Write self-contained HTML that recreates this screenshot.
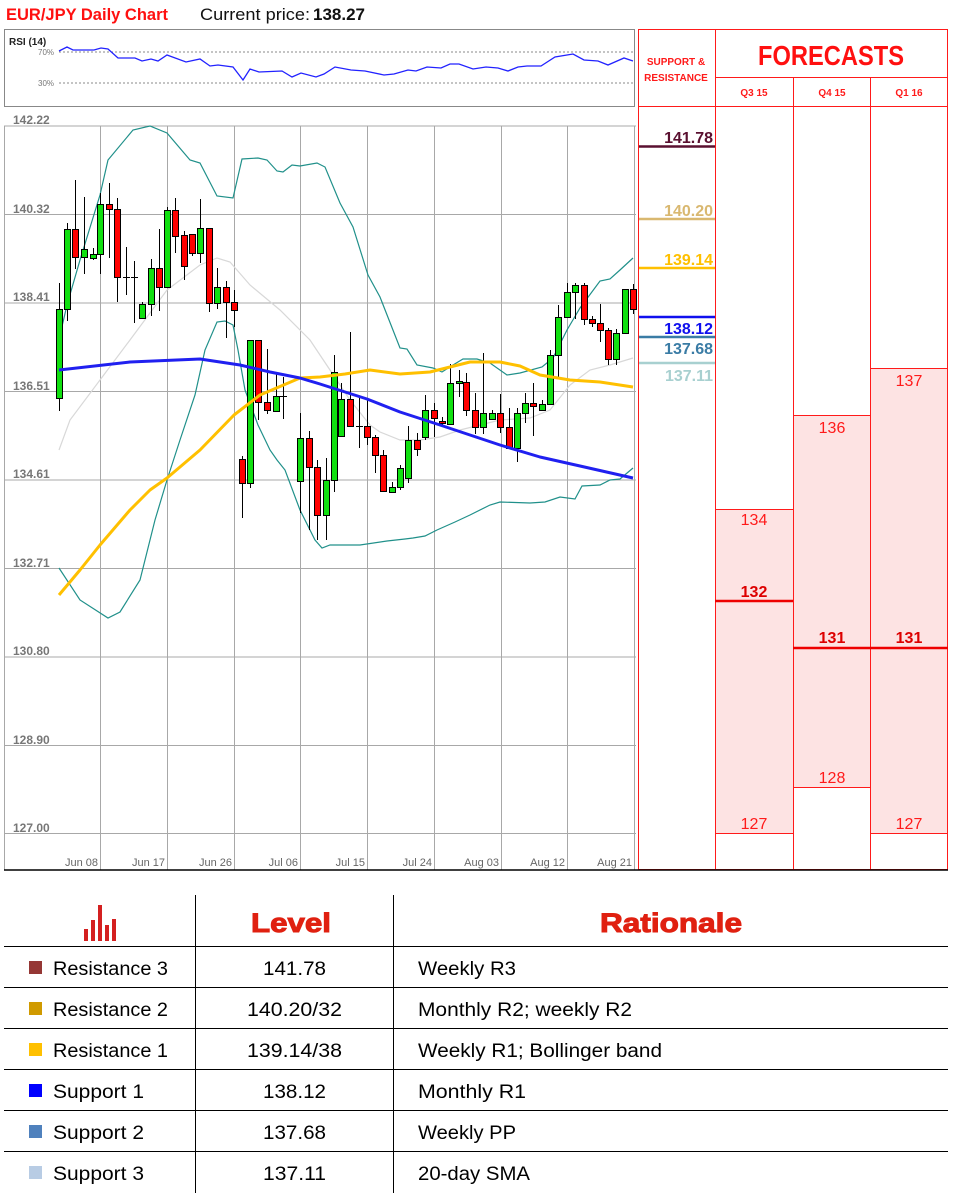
<!DOCTYPE html>
<html><head><meta charset="utf-8"><style>
html,body{margin:0;padding:0;background:#fff;}
svg{display:block;}
text{font-family:"Liberation Sans",sans-serif;}
</style></head><body>
<svg width="962" height="1193" viewBox="0 0 962 1193" xmlns="http://www.w3.org/2000/svg">
<!-- title -->
<text x="6" y="20" font-size="17" font-weight="bold" fill="#ff1010" textLength="162" lengthAdjust="spacingAndGlyphs">EUR/JPY Daily Chart</text>
<text x="200" y="20" font-size="17" fill="#111" textLength="110" lengthAdjust="spacingAndGlyphs">Current price:</text>
<text x="313" y="20" font-size="17" font-weight="bold" fill="#111" textLength="52" lengthAdjust="spacingAndGlyphs">138.27</text>

<!-- RSI -->
<rect x="4.5" y="29.5" width="630" height="77" fill="#fff" stroke="#888"/>
<text x="9" y="45" font-size="10" font-weight="bold" fill="#222">RSI (14)</text>
<line x1="59" y1="52" x2="634" y2="52" stroke="#888" stroke-dasharray="2,2"/>
<line x1="59" y1="83" x2="634" y2="83" stroke="#888" stroke-dasharray="2,2"/>
<text x="38" y="55" font-size="8" fill="#777">70%</text>
<text x="38" y="86" font-size="8" fill="#777">30%</text>
<polyline fill="none" stroke="#2222ff" stroke-width="1.3" points="59,51 67,47 73,50 94,50 101,48 108,49 118,58 135,58 142,61 151,59 158,61 167,55 186,62 200,59 210,66 218,65 233,67 243,80 250,69 259,72 282,71 292,77 301,73 316,77 324,74 335,67 351,70 365,71 384,75 394,74 408,70 416,71 427,67 441,68 450,64 459,64 473,69 486,67 498,68 508,71 518,67 527,66 541,66 555,57 567,55 573,54 584,60 598,61 608,65 624,58 633,61"/>

<!-- main chart grid -->
<g stroke="#a8a8a8" stroke-width="1">
<line x1="4" y1="126" x2="636" y2="126"/>
<line x1="4" y1="214.5" x2="636" y2="214.5"/>
<line x1="4" y1="303" x2="636" y2="303"/>
<line x1="4" y1="391.5" x2="636" y2="391.5"/>
<line x1="4" y1="480" x2="636" y2="480"/>
<line x1="4" y1="568.5" x2="636" y2="568.5"/>
<line x1="4" y1="657" x2="636" y2="657"/>
<line x1="4" y1="745.5" x2="636" y2="745.5"/>
<line x1="4" y1="833.5" x2="636" y2="833.5"/>
<line x1="4.5" y1="126" x2="4.5" y2="870"/>
<line x1="100.5" y1="126" x2="100.5" y2="870"/>
<line x1="167.5" y1="126" x2="167.5" y2="870"/>
<line x1="234.5" y1="126" x2="234.5" y2="870"/>
<line x1="300.5" y1="126" x2="300.5" y2="870"/>
<line x1="367.5" y1="126" x2="367.5" y2="870"/>
<line x1="434.5" y1="126" x2="434.5" y2="870"/>
<line x1="501.5" y1="126" x2="501.5" y2="870"/>
<line x1="567.5" y1="126" x2="567.5" y2="870"/>
<line x1="634.5" y1="126" x2="634.5" y2="870"/>
</g>
<g font-size="12" font-weight="bold" fill="#777">
<text x="13" y="124">142.22</text>
<text x="13" y="213">140.32</text>
<text x="13" y="301">138.41</text>
<text x="13" y="390">136.51</text>
<text x="13" y="478">134.61</text>
<text x="13" y="567">132.71</text>
<text x="13" y="655">130.80</text>
<text x="13" y="744">128.90</text>
<text x="13" y="832">127.00</text>
</g>
<g font-size="11" fill="#666" text-anchor="end">
<text x="98" y="866">Jun 08</text>
<text x="165" y="866">Jun 17</text>
<text x="232" y="866">Jun 26</text>
<text x="298" y="866">Jul 06</text>
<text x="365" y="866">Jul 15</text>
<text x="432" y="866">Jul 24</text>
<text x="499" y="866">Aug 03</text>
<text x="565" y="866">Aug 12</text>
<text x="632" y="866">Aug 21</text>
</g>

<polyline fill="none" stroke="#d8d8d8" stroke-width="1.2" points="59,450 70,420 100,380 130,340 167,290 200,265 217,258 230,262 250,285 280,310 310,340 330,370 350,400 370,425 380,432 400,440 420,440 440,437 460,430 480,425 500,420 530,418 550,410 570,385 590,370 610,365 633,358"/>
<polyline fill="none" stroke="#20908a" stroke-width="1.2" points="60,335 67,305 80,260 100,195 108,160 133,130 150,126 167,133 190,160 200,163 217,196 233,198 242,159 258,158 267,160 277,171 283,172 292,165 300,166 317,163 325,167 340,203 353,227 368,275 380,297 400,348 407,349 417,365 433,368 442,372 453,365 463,359 477,359 490,363 507,375 520,373 542,367 553,358 567,330 580,308 600,281 610,279 620,270 633,258"/>
<polyline fill="none" stroke="#20908a" stroke-width="1.2" points="59,568 80,600 108,618 120,612 140,580 155,520 167,480 180,440 195,395 205,350 217,322 225,321 233,325 238,350 245,390 258,425 270,450 277,460 285,470 300,510 315,540 322,548 330,545 360,545 387,541 405,539 413,538 425,536 437,530 455,522 470,515 490,505 500,502 530,503 545,502 560,497 575,499 582,486 600,485 610,480 620,479 633,468"/>

<g stroke="#000" stroke-width="1">
<line x1="59.5" y1="283" x2="59.5" y2="411"/><rect x="56.5" y="309.5" width="6" height="89" fill="#10e010"/>
<line x1="67.5" y1="223" x2="67.5" y2="321"/><rect x="64.5" y="229.5" width="6" height="80" fill="#10e010"/>
<line x1="75.5" y1="180" x2="75.5" y2="269"/><rect x="72.5" y="229.5" width="6" height="28" fill="#ff0000"/>
<line x1="84.5" y1="197" x2="84.5" y2="274"/><rect x="81.5" y="249.5" width="6" height="8" fill="#10e010"/>
<line x1="93.5" y1="248" x2="93.5" y2="260"/><rect x="90.5" y="254.5" width="6" height="4" fill="#10e010"/>
<line x1="100.5" y1="193" x2="100.5" y2="274"/><rect x="97.5" y="204.5" width="6" height="50" fill="#10e010"/>
<line x1="109.5" y1="183" x2="109.5" y2="258"/><rect x="106.5" y="204.5" width="6" height="5" fill="#ff0000"/>
<line x1="117.5" y1="198" x2="117.5" y2="302"/><rect x="114.5" y="209.5" width="6" height="68" fill="#ff0000"/>
<line x1="126.5" y1="247" x2="126.5" y2="295"/><line x1="123" y1="277.5" x2="130" y2="277.5"/>
<line x1="134.5" y1="261" x2="134.5" y2="323"/><line x1="131" y1="277.5" x2="138" y2="277.5"/>
<line x1="142.5" y1="302" x2="142.5" y2="318"/><rect x="139.5" y="304.5" width="6" height="14" fill="#10e010"/>
<line x1="151.5" y1="259" x2="151.5" y2="316"/><rect x="148.5" y="268.5" width="6" height="36" fill="#10e010"/>
<line x1="159.5" y1="229" x2="159.5" y2="311"/><rect x="156.5" y="268.5" width="6" height="19" fill="#ff0000"/>
<line x1="167.5" y1="207" x2="167.5" y2="288"/><rect x="164.5" y="210.5" width="6" height="77" fill="#10e010"/>
<line x1="175.5" y1="198" x2="175.5" y2="253"/><rect x="172.5" y="210.5" width="6" height="26" fill="#ff0000"/>
<line x1="184.5" y1="231" x2="184.5" y2="280"/><rect x="181.5" y="235.5" width="6" height="31" fill="#ff0000"/>
<line x1="192.5" y1="234" x2="192.5" y2="256"/><rect x="189.5" y="234.5" width="6" height="19" fill="#ff0000"/>
<line x1="200.5" y1="199" x2="200.5" y2="263"/><rect x="197.5" y="228.5" width="6" height="25" fill="#10e010"/>
<line x1="209.5" y1="228" x2="209.5" y2="312"/><rect x="206.5" y="228.5" width="6" height="75" fill="#ff0000"/>
<line x1="217.5" y1="268" x2="217.5" y2="309"/><rect x="214.5" y="287.5" width="6" height="16" fill="#10e010"/>
<line x1="226.5" y1="281" x2="226.5" y2="338"/><rect x="223.5" y="287.5" width="6" height="15" fill="#ff0000"/>
<line x1="234.5" y1="290" x2="234.5" y2="327"/><rect x="231.5" y="302.5" width="6" height="8" fill="#ff0000"/>
<line x1="242.5" y1="456" x2="242.5" y2="518"/><rect x="239.5" y="459.5" width="6" height="24" fill="#ff0000"/>
<line x1="250.5" y1="340" x2="250.5" y2="488"/><rect x="247.5" y="340.5" width="6" height="143" fill="#10e010"/>
<line x1="258.5" y1="340" x2="258.5" y2="420"/><rect x="255.5" y="340.5" width="6" height="62" fill="#ff0000"/>
<line x1="267.5" y1="349" x2="267.5" y2="414"/><rect x="264.5" y="402.5" width="6" height="8" fill="#ff0000"/>
<line x1="276.5" y1="373" x2="276.5" y2="412"/><rect x="273.5" y="396.5" width="6" height="15" fill="#10e010"/>
<line x1="283.5" y1="377" x2="283.5" y2="419"/><line x1="280" y1="396.5" x2="287" y2="396.5"/>
<line x1="300.5" y1="413" x2="300.5" y2="513"/><rect x="297.5" y="438.5" width="6" height="43" fill="#10e010"/>
<line x1="309.5" y1="431" x2="309.5" y2="530"/><rect x="306.5" y="438.5" width="6" height="29" fill="#ff0000"/>
<line x1="317.5" y1="460" x2="317.5" y2="540"/><rect x="314.5" y="467.5" width="6" height="48" fill="#ff0000"/>
<line x1="326.5" y1="458" x2="326.5" y2="540"/><rect x="323.5" y="480.5" width="6" height="35" fill="#10e010"/>
<line x1="334.5" y1="355" x2="334.5" y2="492"/><rect x="331.5" y="372.5" width="6" height="108" fill="#10e010"/>
<line x1="341.5" y1="383" x2="341.5" y2="436"/><rect x="338.5" y="399.5" width="6" height="37" fill="#10e010"/>
<line x1="350.5" y1="332" x2="350.5" y2="427"/><rect x="347.5" y="399.5" width="6" height="27" fill="#ff0000"/>
<line x1="359.5" y1="397" x2="359.5" y2="448"/><line x1="356" y1="426.5" x2="363" y2="426.5"/>
<line x1="367.5" y1="400" x2="367.5" y2="445"/><rect x="364.5" y="426.5" width="6" height="11" fill="#ff0000"/>
<line x1="375.5" y1="435" x2="375.5" y2="473"/><rect x="372.5" y="437.5" width="6" height="18" fill="#ff0000"/>
<line x1="383.5" y1="450" x2="383.5" y2="492"/><rect x="380.5" y="455.5" width="6" height="36" fill="#ff0000"/>
<line x1="392.5" y1="482" x2="392.5" y2="492"/><rect x="389.5" y="487.5" width="6" height="5" fill="#10e010"/>
<line x1="400.5" y1="465" x2="400.5" y2="490"/><rect x="397.5" y="468.5" width="6" height="19" fill="#10e010"/>
<line x1="408.5" y1="426" x2="408.5" y2="483"/><rect x="405.5" y="440.5" width="6" height="38" fill="#10e010"/>
<line x1="417.5" y1="433" x2="417.5" y2="456"/><rect x="414.5" y="440.5" width="6" height="9" fill="#ff0000"/>
<line x1="425.5" y1="395" x2="425.5" y2="440"/><rect x="422.5" y="410.5" width="6" height="27" fill="#10e010"/>
<line x1="434.5" y1="403" x2="434.5" y2="437"/><rect x="431.5" y="410.5" width="6" height="8" fill="#ff0000"/>
<line x1="442.5" y1="417" x2="442.5" y2="426"/><rect x="439.5" y="421.5" width="6" height="2" fill="#ff0000"/>
<line x1="450.5" y1="364" x2="450.5" y2="424"/><rect x="447.5" y="383.5" width="6" height="41" fill="#10e010"/>
<line x1="459.5" y1="370" x2="459.5" y2="397"/><rect x="456.5" y="381.5" width="6" height="2" fill="#10e010"/>
<line x1="466.5" y1="373" x2="466.5" y2="416"/><rect x="463.5" y="382.5" width="6" height="28" fill="#ff0000"/>
<line x1="475.5" y1="393" x2="475.5" y2="434"/><rect x="472.5" y="410.5" width="6" height="17" fill="#ff0000"/>
<line x1="483.5" y1="353" x2="483.5" y2="434"/><rect x="480.5" y="413.5" width="6" height="14" fill="#10e010"/>
<line x1="492.5" y1="410" x2="492.5" y2="420"/><rect x="489.5" y="413.5" width="6" height="6" fill="#10e010"/>
<line x1="500.5" y1="394" x2="500.5" y2="433"/><rect x="497.5" y="413.5" width="6" height="14" fill="#ff0000"/>
<line x1="509.5" y1="408" x2="509.5" y2="448"/><rect x="506.5" y="427.5" width="6" height="21" fill="#ff0000"/>
<line x1="517.5" y1="408" x2="517.5" y2="462"/><rect x="514.5" y="413.5" width="6" height="35" fill="#10e010"/>
<line x1="525.5" y1="393" x2="525.5" y2="423"/><rect x="522.5" y="403.5" width="6" height="10" fill="#10e010"/>
<line x1="533.5" y1="383" x2="533.5" y2="436"/><rect x="530.5" y="403.5" width="6" height="3" fill="#ff0000"/>
<line x1="542.5" y1="400" x2="542.5" y2="410"/><rect x="539.5" y="404.5" width="6" height="6" fill="#10e010"/>
<line x1="550.5" y1="350" x2="550.5" y2="405"/><rect x="547.5" y="355.5" width="6" height="49" fill="#10e010"/>
<line x1="558.5" y1="305" x2="558.5" y2="377"/><rect x="555.5" y="317.5" width="6" height="38" fill="#10e010"/>
<line x1="567.5" y1="283" x2="567.5" y2="317"/><rect x="564.5" y="292.5" width="6" height="25" fill="#10e010"/>
<line x1="575.5" y1="283" x2="575.5" y2="319"/><rect x="572.5" y="285.5" width="6" height="7" fill="#10e010"/>
<line x1="584.5" y1="283" x2="584.5" y2="325"/><rect x="581.5" y="285.5" width="6" height="34" fill="#ff0000"/>
<line x1="592.5" y1="316" x2="592.5" y2="327"/><rect x="589.5" y="319.5" width="6" height="4" fill="#ff0000"/>
<line x1="600.5" y1="304" x2="600.5" y2="342"/><rect x="597.5" y="323.5" width="6" height="7" fill="#ff0000"/>
<line x1="608.5" y1="328" x2="608.5" y2="365"/><rect x="605.5" y="330.5" width="6" height="29" fill="#ff0000"/>
<line x1="616.5" y1="329" x2="616.5" y2="365"/><rect x="613.5" y="333.5" width="6" height="26" fill="#10e010"/>
<line x1="625.5" y1="289" x2="625.5" y2="334"/><rect x="622.5" y="289.5" width="6" height="44" fill="#10e010"/>
<line x1="633.5" y1="284" x2="633.5" y2="314"/><rect x="630.5" y="289.5" width="6" height="20" fill="#ff0000"/>
</g>

<polyline fill="none" stroke="#ffc000" stroke-width="3" stroke-linejoin="round" points="59,595 80,570 100,545 130,510 150,490 167,478 200,450 234,415 260,395 300,378 320,377 345,374 370,370 400,374 430,372 470,362 500,362 520,366 540,375 570,380 600,382 633,387"/>
<polyline fill="none" stroke="#2020f0" stroke-width="3" stroke-linejoin="round" points="59,370 130,362 200,359 240,365 270,372 300,378 320,384 367,399 400,412 440,425 500,445 540,457 580,466 633,478"/>

<g fill="#fde3e3">
<rect x="715" y="509" width="78" height="324"/>
<rect x="793" y="415" width="77" height="372"/>
<rect x="870" y="368" width="78" height="465"/>
</g>
<g stroke="#ff1a1a" stroke-width="1" fill="none">
<rect x="638.5" y="29.5" width="309" height="840"/>
<line x1="715.5" y1="30" x2="715.5" y2="870"/>
<line x1="793.5" y1="77" x2="793.5" y2="870"/>
<line x1="870.5" y1="77" x2="870.5" y2="870"/>
<line x1="715" y1="77.5" x2="948" y2="77.5"/>
<line x1="638" y1="106.5" x2="948" y2="106.5"/>
<line x1="715" y1="509.5" x2="793" y2="509.5"/>
<line x1="715" y1="833.5" x2="793" y2="833.5"/>
<line x1="793" y1="415.5" x2="870" y2="415.5"/>
<line x1="793" y1="787.5" x2="870" y2="787.5"/>
<line x1="870" y1="368.5" x2="948" y2="368.5"/>
<line x1="870" y1="833.5" x2="948" y2="833.5"/>
</g>
<line x1="715" y1="601" x2="793" y2="601" stroke="#ee0000" stroke-width="2.5"/>
<line x1="793" y1="648" x2="948" y2="648" stroke="#ee0000" stroke-width="2.5"/>
<text x="676" y="65" font-size="10" font-weight="bold" fill="#ff1a1a" text-anchor="middle">SUPPORT &amp;</text>
<text x="676" y="81" font-size="10" font-weight="bold" fill="#ff1a1a" text-anchor="middle">RESISTANCE</text>
<text x="831" y="65" font-size="28" font-weight="bold" fill="#ff1010" text-anchor="middle" textLength="146" lengthAdjust="spacingAndGlyphs">FORECASTS</text>
<g font-size="10" font-weight="bold" fill="#ff1a1a" text-anchor="middle">
<text x="754" y="96">Q3 15</text>
<text x="832" y="96">Q4 15</text>
<text x="909" y="96">Q1 16</text>
</g>
<g font-size="16" text-anchor="middle" fill="#ff1a1a">
<text x="754" y="525">134</text>
<text x="754" y="597" font-weight="bold" fill="#dd0000">132</text>
<text x="754" y="829">127</text>
<text x="832" y="433">136</text>
<text x="832" y="643" font-weight="bold" fill="#dd0000">131</text>
<text x="832" y="783">128</text>
<text x="909" y="386">137</text>
<text x="909" y="643" font-weight="bold" fill="#dd0000">131</text>
<text x="909" y="829">127</text>
</g>
<line x1="639" y1="146.5" x2="715" y2="146.5" stroke="#5a1030" stroke-width="2.5"/>
<line x1="639" y1="219" x2="715" y2="219" stroke="#d9b870" stroke-width="2.5"/>
<line x1="639" y1="268" x2="715" y2="268" stroke="#ffc000" stroke-width="2.5"/>
<line x1="639" y1="317" x2="715" y2="317" stroke="#1010ee" stroke-width="2.5"/>
<line x1="639" y1="337" x2="715" y2="337" stroke="#3a7ca5" stroke-width="2.5"/>
<line x1="639" y1="363" x2="715" y2="363" stroke="#a8d0d0" stroke-width="2.5"/>
<g font-size="16" font-weight="bold" text-anchor="end">
<text x="713" y="143" fill="#5a1030">141.78</text>
<text x="713" y="216" fill="#d9b870">140.20</text>
<text x="713" y="265" fill="#ffc000">139.14</text>
<text x="713" y="334" fill="#1010ee">138.12</text>
<text x="713" y="354" fill="#3a7ca5">137.68</text>
<text x="713" y="381" fill="#a8d0d0">137.11</text>
</g>
<line x1="4" y1="870" x2="948" y2="870" stroke="#000" stroke-width="1.5"/>

<g fill="#d42020">
<rect x="84" y="929" width="4" height="12"/>
<rect x="91" y="920" width="4" height="21"/>
<rect x="98" y="905" width="4" height="36"/>
<rect x="105" y="925" width="4" height="16"/>
<rect x="112" y="919" width="4" height="22"/>
</g>
<text x="251" y="932" font-size="27" font-weight="bold" fill="#e02010" textLength="80" lengthAdjust="spacingAndGlyphs" stroke="#e02010" stroke-width="1">Level</text>
<text x="600" y="932" font-size="27" font-weight="bold" fill="#e02010" textLength="142" lengthAdjust="spacingAndGlyphs" stroke="#e02010" stroke-width="1">Rationale</text>
<g stroke="#000" stroke-width="1">
<line x1="195.5" y1="895" x2="195.5" y2="1193"/>
<line x1="393.5" y1="895" x2="393.5" y2="1193"/>
<line x1="4" y1="946.5" x2="948" y2="946.5"/>
<line x1="4" y1="987.5" x2="948" y2="987.5"/>
<line x1="4" y1="1028.5" x2="948" y2="1028.5"/>
<line x1="4" y1="1069.5" x2="948" y2="1069.5"/>
<line x1="4" y1="1110.5" x2="948" y2="1110.5"/>
<line x1="4" y1="1151.5" x2="948" y2="1151.5"/>
</g>
<rect x="29" y="961" width="13" height="13" fill="#953735"/>
<rect x="29" y="1002" width="13" height="13" fill="#d09a00"/>
<rect x="29" y="1043" width="13" height="13" fill="#ffc000"/>
<rect x="29" y="1084" width="13" height="13" fill="#0000ff"/>
<rect x="29" y="1125" width="13" height="13" fill="#4f81bd"/>
<rect x="29" y="1166" width="13" height="13" fill="#b8cce4"/>
<g font-size="19" fill="#000" lengthAdjust="spacingAndGlyphs">
<text x="53" y="975" textLength="115" lengthAdjust="spacingAndGlyphs">Resistance 3</text>
<text x="53" y="1016" textLength="115" lengthAdjust="spacingAndGlyphs">Resistance 2</text>
<text x="53" y="1057" textLength="115" lengthAdjust="spacingAndGlyphs">Resistance 1</text>
<text x="53" y="1098" textLength="91" lengthAdjust="spacingAndGlyphs">Support 1</text>
<text x="53" y="1139" textLength="91" lengthAdjust="spacingAndGlyphs">Support 2</text>
<text x="53" y="1180" textLength="91" lengthAdjust="spacingAndGlyphs">Support 3</text>
<text x="263" y="975" textLength="63" lengthAdjust="spacingAndGlyphs">141.78</text>
<text x="247" y="1016" textLength="95" lengthAdjust="spacingAndGlyphs">140.20/32</text>
<text x="247" y="1057" textLength="95" lengthAdjust="spacingAndGlyphs">139.14/38</text>
<text x="263" y="1098" textLength="63" lengthAdjust="spacingAndGlyphs">138.12</text>
<text x="263" y="1139" textLength="63" lengthAdjust="spacingAndGlyphs">137.68</text>
<text x="263" y="1180" textLength="63" lengthAdjust="spacingAndGlyphs">137.11</text>
<text x="418" y="975" textLength="98" lengthAdjust="spacingAndGlyphs">Weekly R3</text>
<text x="418" y="1016" textLength="214" lengthAdjust="spacingAndGlyphs">Monthly R2; weekly R2</text>
<text x="418" y="1057" textLength="244" lengthAdjust="spacingAndGlyphs">Weekly R1; Bollinger band</text>
<text x="418" y="1098" textLength="108" lengthAdjust="spacingAndGlyphs">Monthly R1</text>
<text x="418" y="1139" textLength="98" lengthAdjust="spacingAndGlyphs">Weekly PP</text>
<text x="418" y="1180" textLength="112" lengthAdjust="spacingAndGlyphs">20-day SMA</text>
</g>
</svg>
</body></html>
